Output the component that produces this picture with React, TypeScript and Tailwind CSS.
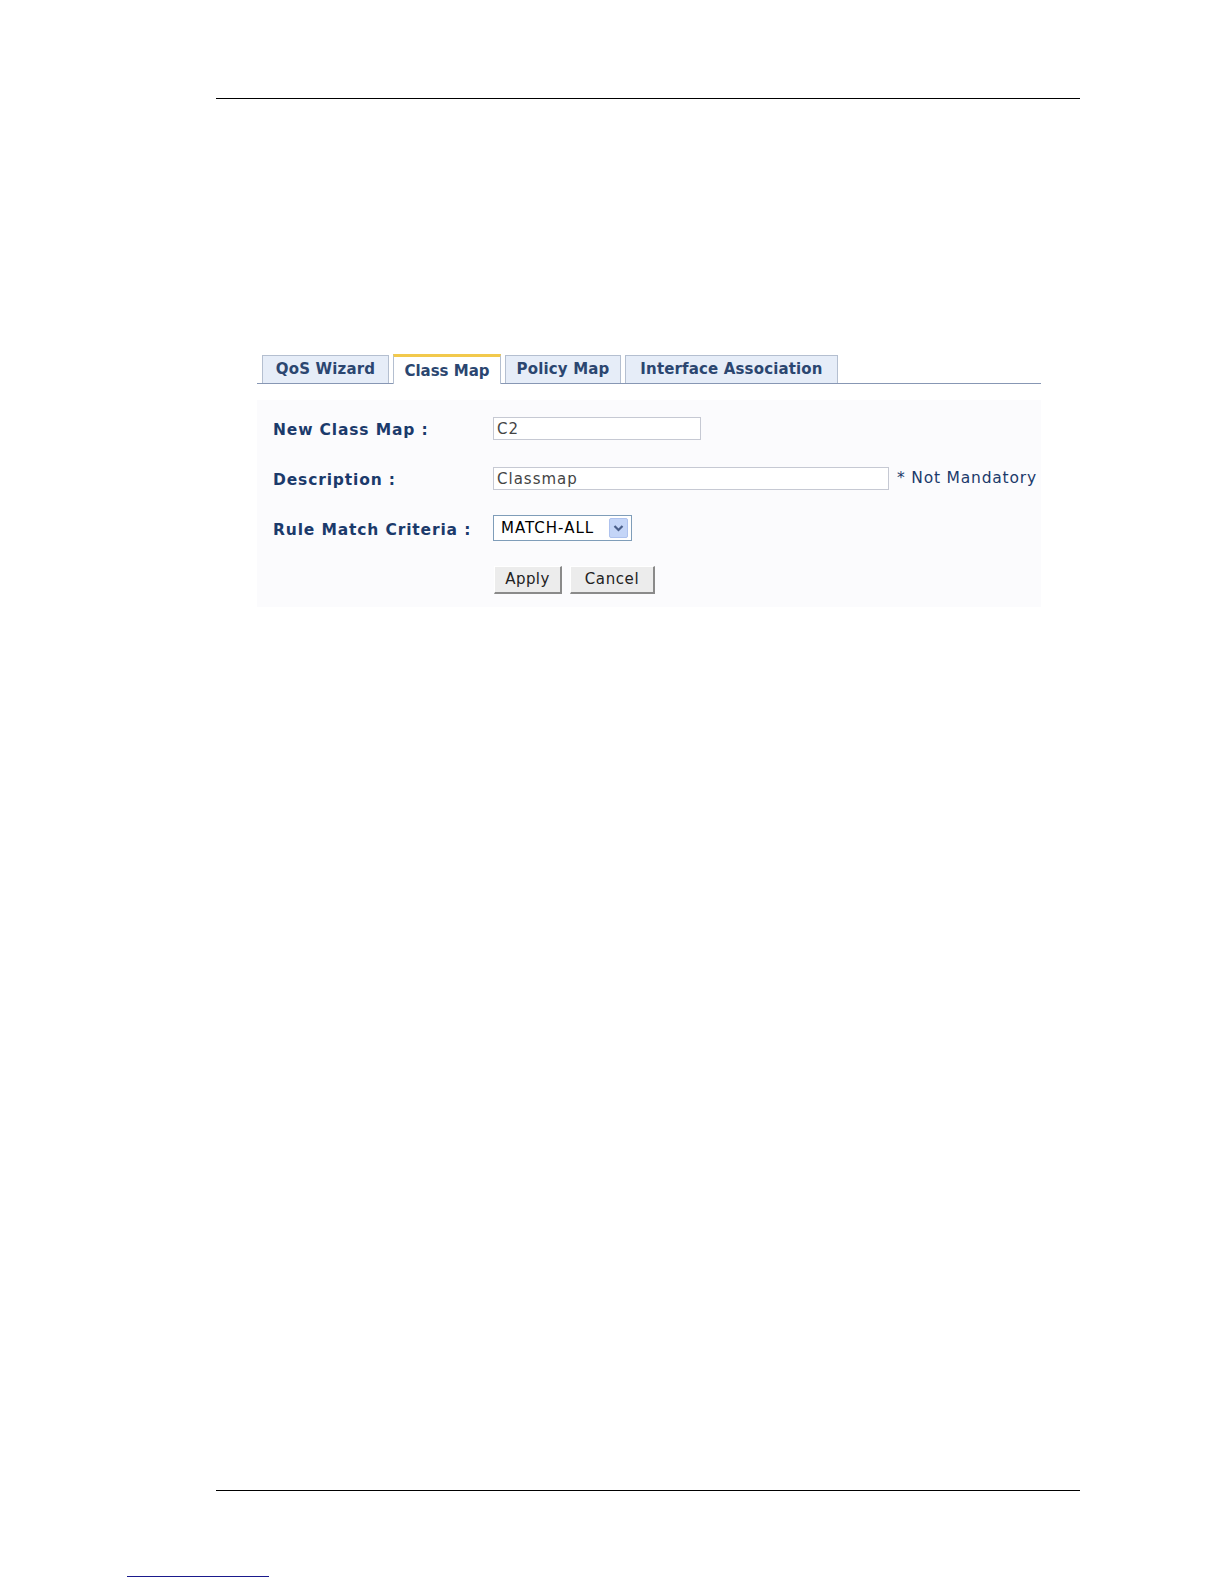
import React from 'react';

const tabs = [
  { label: 'QoS Wizard', w: 'w-[127px]', active: false },
  { label: 'Class Map', w: 'w-[108px]', active: true },
  { label: 'Policy Map', w: 'w-[116px]', active: false },
  { label: 'Interface Association', w: 'w-[213px]', active: false },
];

const font = { fontFamily: '"DejaVu Sans", Verdana, sans-serif' };

const App: React.FC = () => {
  return (
    <div className="w-[1224px] h-[1584px] bg-white flex flex-col pt-[98px]" style={font}>
      <div className="ml-[216px] w-[864px] h-px bg-black" />

      <div className="ml-[257px] w-[784px] mt-[256px]">
        {/* tab strip */}
        <div className="flex items-end gap-[4px] pl-[5px] border-b border-[#8797b4] h-[29px]">
          {tabs.map((t) =>
            t.active ? (
              <div
                key={t.label}
                className={`${t.w} h-[30px] -mb-px bg-white border-t-[3px] border-t-[#f2c94c] border-x border-x-[#b4bfd0] flex items-center justify-center text-[15px] font-bold text-[#2b4670] pt-[2px]`}
              >
                {t.label}
              </div>
            ) : (
              <div
                key={t.label}
                className={`${t.w} h-[28px] bg-[#e6edf8] border border-[#b4bfd0] border-b-0 flex items-center justify-center text-[15px] font-bold text-[#2b4670] tracking-[0.15px]`}
              >
                {t.label}
              </div>
            )
          )}
        </div>

        {/* form */}
        <div className="mt-[16px] bg-[#fbfbfd] pt-[3px] pb-[13px]">
          <div className="flex items-center h-[50px]">
            <div className="w-[236px] pl-[16px] pt-[5px] text-[15.5px] font-bold text-[#1b3a6b] tracking-[0.85px]">New Class Map :</div>
            <div className="w-[208px] h-[23px] border border-[#c6c9d3] bg-white flex items-center pl-[3px] pt-[3px] text-[15px] text-[#444] tracking-[1px]">C2</div>
          </div>
          <div className="flex items-center h-[50px]">
            <div className="w-[236px] pl-[16px] pt-[5px] text-[15.5px] font-bold text-[#1b3a6b] tracking-[0.85px]">Description :</div>
            <div className="w-[396px] h-[23px] border border-[#c6c9d3] bg-white flex items-center pl-[3px] pt-[3px] text-[15px] text-[#444] tracking-[1px]">Classmap</div>
            <div className="ml-[8px] pt-[2px] text-[15.5px] text-[#1b3a6b] tracking-[0.8px] whitespace-nowrap">* Not Mandatory</div>
          </div>
          <div className="flex items-center h-[50px]">
            <div className="w-[236px] pl-[16px] pt-[5px] text-[15.5px] font-bold text-[#1b3a6b] tracking-[0.85px]">Rule Match Criteria :</div>
            <div className="w-[139px] h-[26px] border border-[#7f9db9] bg-white flex items-center justify-between pl-[7px] pr-[3px]">
              <span className="text-[15px] text-black tracking-[1px] pt-[1px]">MATCH-ALL</span>
              <span className="w-[19px] h-[20px] bg-[#c4d5f7] border border-[#aec2ee] rounded-[2px] flex items-center justify-center">
                <svg width="11" height="9" viewBox="0 0 11 9">
                  <path d="M1.5 2 L5.5 6 L9.5 2" fill="none" stroke="#4a5f8a" strokeWidth="2.2" />
                </svg>
              </span>
            </div>
          </div>
          <div className="flex items-center gap-[8px] pl-[237px] mt-[13px]">
            <button className="w-[68px] h-[28px] bg-[#ececec] border-t border-l border-t-white border-l-white border-r-2 border-b-2 border-r-[#8a8a8a] border-b-[#8a8a8a] text-[15px] text-[#222] tracking-[0.4px]">
              Apply
            </button>
            <button className="w-[85px] h-[28px] bg-[#ececec] border-t border-l border-t-white border-l-white border-r-2 border-b-2 border-r-[#8a8a8a] border-b-[#8a8a8a] text-[15px] text-[#222] tracking-[0.6px]">
              Cancel
            </button>
          </div>
        </div>
      </div>

      <div className="ml-[216px] w-[864px] h-px bg-black mt-[883px]" />
      <div className="ml-[127px] w-[142px] h-px bg-[#1a1a8c] mt-[85px]" />
    </div>
  );
};

export default App;
